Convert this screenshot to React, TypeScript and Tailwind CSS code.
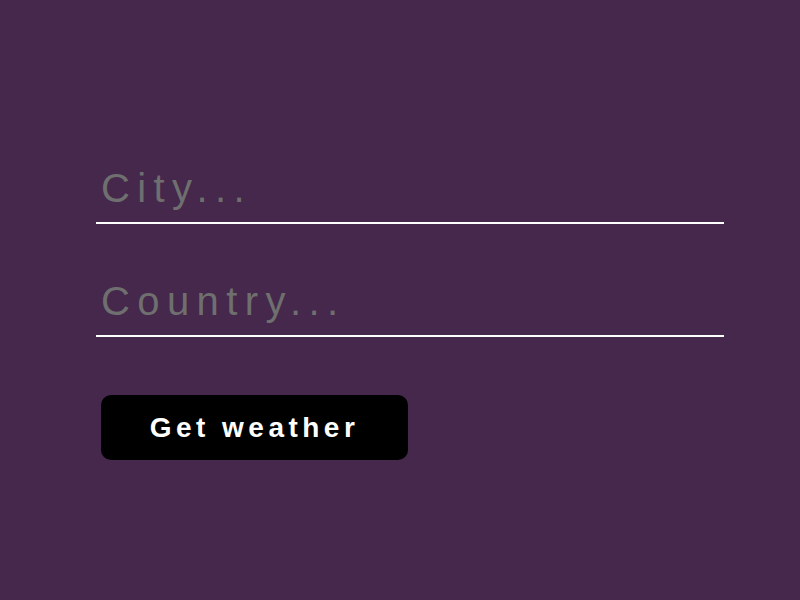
import { useState } from "react";

export default function App() {
  const [city, setCity] = useState("");
  const [country, setCountry] = useState("");

  return (
    <div className="min-h-screen w-full bg-[#45284c] font-['Liberation_Sans',Arial,sans-serif]">
      <form
        className="flex flex-col pl-[96px] pt-[160px]"
        onSubmit={(e) => e.preventDefault()}
      >
        <input
          type="text"
          value={city}
          onChange={(e) => setCity(e.target.value)}
          placeholder="City..."
          className="w-[628px] h-[64px] pl-[5px] pb-[6px] bg-transparent border-b-2 border-white text-[40px] tracking-[0.185em] text-white placeholder:text-[#6f6f6f] outline-none"
        />
        <input
          type="text"
          value={country}
          onChange={(e) => setCountry(e.target.value)}
          placeholder="Country..."
          className="mt-[49px] w-[628px] h-[64px] pl-[5px] pb-[6px] bg-transparent border-b-2 border-white text-[40px] tracking-[0.185em] text-white placeholder:text-[#6f6f6f] outline-none"
        />
        <button
          type="submit"
          className="mt-[58px] ml-[5px] w-[307px] h-[65px] rounded-[10px] bg-black text-white text-[28px] font-bold tracking-[0.16em]"
        >
          Get weather
        </button>
      </form>
    </div>
  );
}
